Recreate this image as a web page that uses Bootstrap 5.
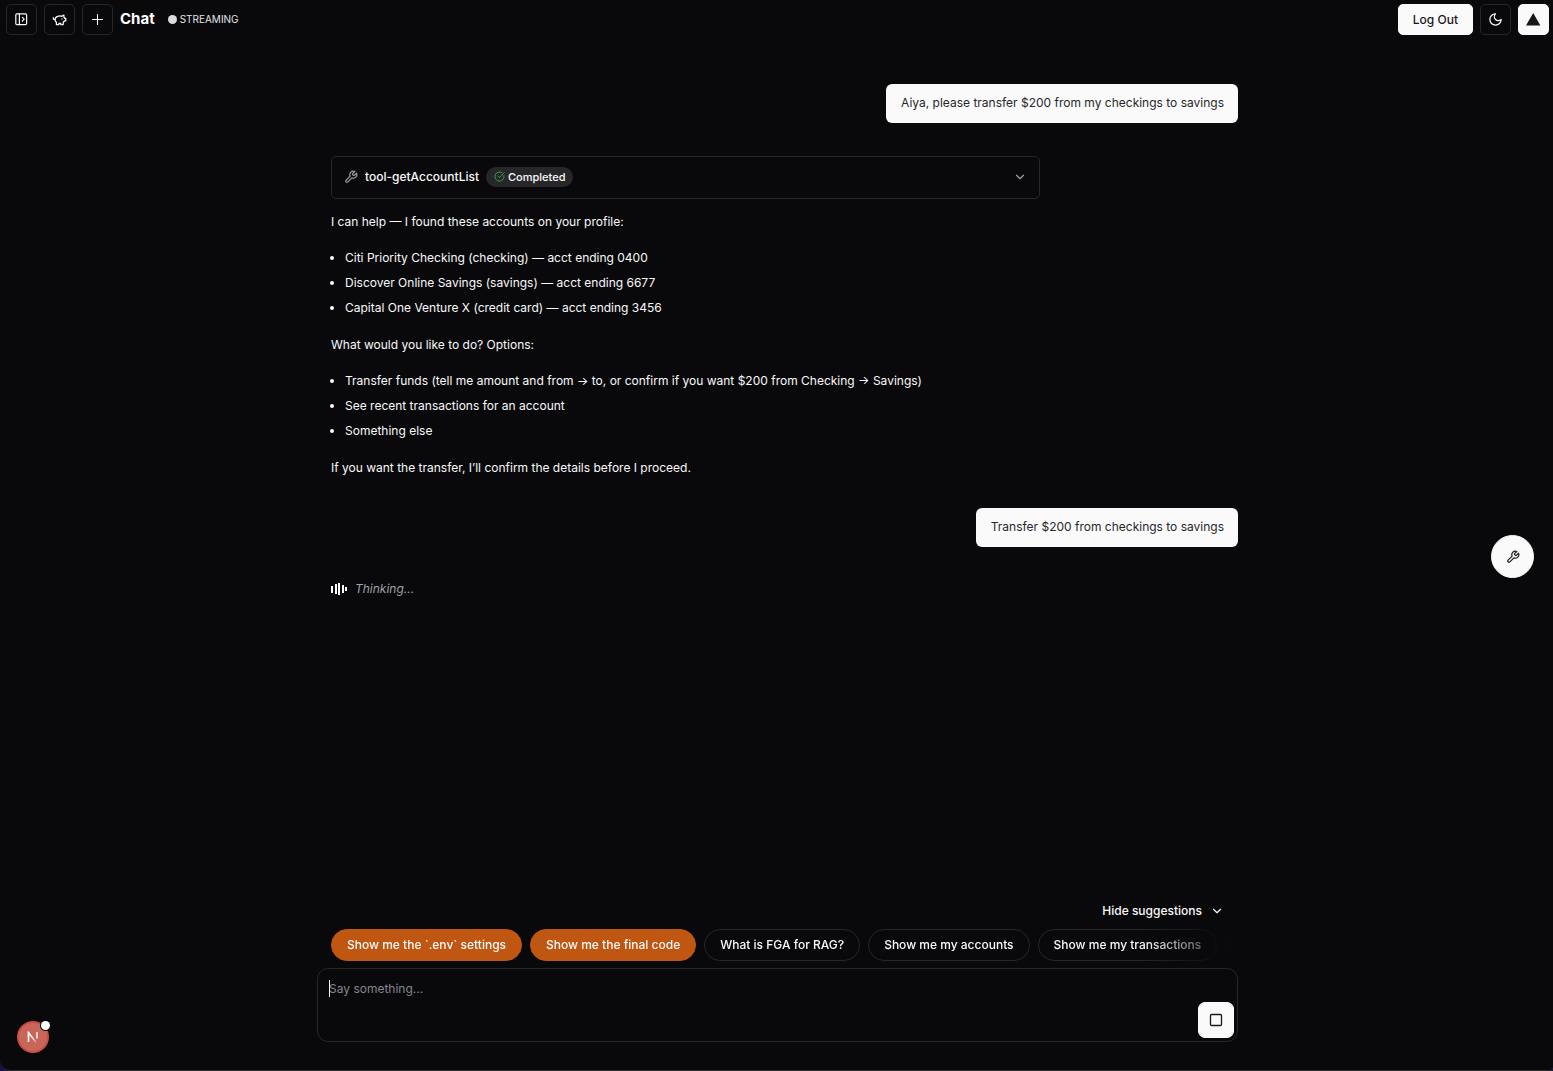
<!DOCTYPE html>
<html lang="en" data-bs-theme="dark">
<head>
<meta charset="utf-8">
<meta name="viewport" content="width=device-width, initial-scale=1">
<title>Chat</title>
<link href="https://cdn.jsdelivr.net/npm/bootstrap@5.3.0/dist/css/bootstrap.min.css" rel="stylesheet">
<style>
:root { --ink: #09090b; --paper: #fafafa; --line: #27272a; --muted: #a1a1aa; }
html { background: #15124a; }
body { background: transparent; color: var(--paper); font-family: Inter, "Liberation Sans", sans-serif; font-size: 12px; line-height: 22px; }
.app-shell { background: var(--ink); border-radius: 0 0 4px 10px; border-bottom: 1px solid #2c2b31; }
svg { display: block; flex: none; }
.stroke-icon { fill: none; stroke: currentColor; stroke-width: 2; stroke-linecap: round; stroke-linejoin: round; }
.top-bar { padding: 4px 4px 4px 6px; gap: 7px; }
.tool-btn { --bs-btn-padding-x: 0; --bs-btn-padding-y: 0; --bs-btn-border-radius: 5px; --bs-btn-color: var(--paper); --bs-btn-border-color: var(--line); --bs-btn-hover-color: var(--paper); --bs-btn-hover-border-color: var(--muted); width: 31px; height: 31px; display: inline-flex; align-items: center; justify-content: center; }
.solid-btn { --bs-btn-color: #18181b; --bs-btn-bg: var(--paper); --bs-btn-border-color: var(--paper); --bs-btn-hover-bg: #e4e4e7; --bs-btn-hover-color: #18181b; }
.logout-btn { width: auto; padding: 0 14px; font-size: 12px; font-weight: 500; }
.page-name { font-size: 15px; font-weight: 700; line-height: 20px; }
.top-bar .page-name, .live-state { padding-bottom: 1px; }
.live-state { font-size: 10px; color: #e4e4e7; gap: 3px; margin-left: 6px; }
.live-dot { width: 9px; height: 9px; border-radius: 50%; background: #dcdcdf; }
.column-wrap { padding-left: 2px; }
.chat-column { max-width: 921px; }
.thread { padding: 45px 0 0 14px; }
.bubble { background: var(--paper); color: #27272a; border-radius: 6px; padding: 8px 14px 9px 15px; }
.reply { margin: 33px 0 29px; }
.tool-card { width: 709px; max-width: 100%; border: 1px solid var(--line); border-radius: 5px; background: transparent; color: inherit; padding: 0 12px 2px; height: 43px; gap: 7px; margin-bottom: 12px; }
.tool-name { font-size: 12px; font-weight: 500; }
.state-pill { background: var(--line); font-size: 11px; font-weight: 500; line-height: 20px; padding: 0 8px; gap: 3px; }
.reply p { margin: 0 0 14px; }
.reply ul { margin: 0 0 15px; padding-left: 14px; }
.reply li + li { margin-top: 3px; }
.thinking { margin-top: 31px; gap: 8px; color: var(--muted); }
.hide-btn { --bs-btn-padding-x: 14px; --bs-btn-padding-y: 4px; --bs-btn-font-size: 12px; --bs-btn-font-weight: 500; --bs-btn-color: var(--paper); --bs-btn-hover-color: #d4d4d8; --bs-btn-line-height: 22px; gap: 8px; border: 0; }
.chip-row { gap: 8px; margin: 3px 0 7px 14px; -webkit-mask-image: linear-gradient(to right, #000 calc(100% - 96px), transparent); mask-image: linear-gradient(to right, #000 calc(100% - 96px), transparent); }
.chip { --bs-btn-padding-x: 15px; --bs-btn-padding-y: 4px; --bs-btn-font-size: 12px; --bs-btn-font-weight: 500; --bs-btn-line-height: 22px; --bs-btn-color: var(--paper); --bs-btn-border-color: var(--line); --bs-btn-hover-color: var(--paper); --bs-btn-hover-border-color: var(--muted); flex: none; }
.chip-hot { --bs-btn-bg: #bf5712; --bs-btn-border-color: #bf5712; --bs-btn-hover-bg: #a84b0d; }
.composer { border: 1px solid var(--line); border-radius: 11px; height: 74px; margin-bottom: 28px; }
.composer textarea { background: transparent; border: 0; padding: 9px 48px 9px 11px; font-size: 12px; line-height: 22px; resize: none; color: var(--paper); }
.composer textarea::placeholder { color: #85858e; }
.text-caret { left: 11px; top: 11px; width: 1px; height: 17px; background: var(--paper); }
.stop-btn { width: 36px; height: 36px; right: 3px; bottom: 3px; --bs-btn-border-radius: 7px; }
.fab { width: 43px; height: 43px; right: 19px; top: 535px; --bs-btn-border-radius: 50%; }
.dev-badge { left: 17px; bottom: 17px; width: 32px; height: 32px; border: 2px solid #c94f45; background: #ca6559; border-radius: 50%; padding: 0; }
.dev-dot { top: -2px; right: -3px; width: 9px; height: 9px; border-radius: 50%; background: #fff; box-shadow: 0 0 0 1px var(--ink); }
</style>
</head>
<body>
<svg width="0" height="0" class="position-absolute" aria-hidden="true">
  <symbol id="wrench" viewBox="0 0 24 24"><path d="M14.7 6.3a1 1 0 0 0 0 1.4l1.6 1.6a1 1 0 0 0 1.4 0l3.77-3.77a6 6 0 0 1-7.94 7.94l-6.91 6.91a2.12 2.12 0 0 1-3-3l6.91-6.91a6 6 0 0 1 7.94-7.94l-3.76 3.76z"/></symbol>
  <symbol id="chevron" viewBox="0 0 24 24"><path d="m6 9 6 6 6-6"/></symbol>
</svg>
<div class="app-shell d-flex flex-column min-vh-100 overflow-hidden position-relative">
  <header class="top-bar d-flex align-items-center">
    <button class="btn tool-btn" type="button" aria-label="Toggle sidebar"><svg class="stroke-icon" width="15" height="15" viewBox="0 0 25 25"><rect x="3" y="3" width="18" height="18" rx="2"/><path d="M9 3v18M14 9l3 3-3 3"/></svg></button>
    <button class="btn tool-btn" type="button" aria-label="Accounts"><svg class="stroke-icon" width="15" height="15" viewBox="0 0 24 24"><path d="M19 5c-1.5 0-2.8 1.4-3 2-3.5-1.5-11-.3-11 5 0 1.8 0 3 2 4.5V20h4v-2h3v2h4v-4c1-.5 1.7-1 2-2h2v-4h-2c0-1-.5-1.5-1-2V5zM2 9v1c0 1.1.9 2 2 2h1M16 11h.01"/></svg></button>
    <button class="btn tool-btn" type="button" aria-label="New chat"><svg class="stroke-icon" width="15" height="15" viewBox="0 0 24 24"><path d="M4 12h16M12 4v16" stroke-width="1.700"/></svg></button>
    <h1 class="page-name mb-0">Chat</h1>
    <div class="live-state d-flex align-items-center"><span class="live-dot"></span>STREAMING</div>
    <button class="btn tool-btn solid-btn logout-btn ms-auto" type="button">Log Out</button>
    <button class="btn tool-btn" type="button" aria-label="Toggle theme"><svg class="stroke-icon" width="15" height="15" viewBox="0 0 24 24"><path d="M12 3a6 6 0 0 0 9 9 9 9 0 1 1-9-9Z"/></svg></button>
    <a class="btn tool-btn solid-btn" href="#" aria-label="Deploy"><svg width="15" height="13" viewBox="0 0 15 13"><path d="M7.200 0l7.200 12.500H0z" fill="#18181b"/></svg></a>
  </header>

  <main class="column-wrap flex-grow-1 d-flex flex-column">
    <div class="chat-column thread w-100 mx-auto flex-grow-1">
      <div class="d-flex justify-content-end"><div class="bubble">Aiya, please transfer $200 from my checkings to savings</div></div>
      <section class="reply">
        <button class="tool-card d-flex align-items-center" type="button" aria-expanded="false">
          <svg class="stroke-icon" width="14" height="14" color="#a1a1aa"><use href="#wrench"/></svg>
          <span class="tool-name">tool-getAccountList</span>
          <span class="state-pill rounded-pill d-flex align-items-center"><svg class="stroke-icon" width="11" height="11" viewBox="0 0 24 24" color="#2fa84f"><path d="M21.8 10A10 10 0 1 1 17 3.34M9 11l3 3L22 4"/></svg>Completed</span>
          <svg class="stroke-icon ms-auto" width="14" height="14" color="#a1a1aa"><use href="#chevron"/></svg>
        </button>
        <p>I can help — I found these accounts on your profile:</p>
        <ul>
          <li>Citi Priority Checking (checking) — acct ending 0400</li>
          <li>Discover Online Savings (savings) — acct ending 6677</li>
          <li>Capital One Venture X (credit card) — acct ending 3456</li>
        </ul>
        <p>What would you like to do? Options:</p>
        <ul>
          <li>Transfer funds (tell me amount and from → to, or confirm if you want $200 from Checking → Savings)</li>
          <li>See recent transactions for an account</li>
          <li>Something else</li>
        </ul>
        <p class="mb-0">If you want the transfer, I’ll confirm the details before I proceed.</p>
      </section>
      <div class="d-flex justify-content-end"><div class="bubble">Transfer $200 from checkings to savings</div></div>
      <div class="thinking d-flex align-items-center" role="status">
        <svg width="16" height="12" viewBox="0 0 16 12" fill="#fff"><path d="M0 3h2v7H0zM4 1h2v10H4zM7 0h2v12H7zM11 2h2v8h-2zM14 4h2v4h-2z"/></svg>
        <em>Thinking...</em>
      </div>
    </div>

    <div class="chat-column w-100 mx-auto">
      <div class="d-flex justify-content-end">
        <button class="btn hide-btn d-flex align-items-center" type="button">Hide suggestions <svg class="stroke-icon" width="14" height="14"><use href="#chevron"/></svg></button>
      </div>
      <div class="chip-row d-flex overflow-hidden">
        <button class="btn chip chip-hot rounded-pill" type="button">Show me the `.env` settings</button>
        <button class="btn chip chip-hot rounded-pill" type="button">Show me the final code</button>
        <button class="btn chip rounded-pill" type="button">What is FGA for RAG?</button>
        <button class="btn chip rounded-pill" type="button">Show me my accounts</button>
        <button class="btn chip rounded-pill" type="button">Show me my transactions</button>
        <button class="btn chip rounded-pill" type="button" aria-label="More suggestions"></button>
      </div>
      <form class="composer position-relative">
        <textarea class="w-100 h-100 d-block shadow-none" aria-label="Message" placeholder="Say something..."></textarea>
        <span class="text-caret position-absolute"></span>
        <button class="btn tool-btn solid-btn stop-btn position-absolute" type="button" aria-label="Stop"><svg class="stroke-icon" width="14" height="14" viewBox="0 0 14 14"><rect x="1.500" y="1.500" width="11" height="11" rx="1" stroke-width="1.300"/></svg></button>
      </form>
    </div>
  </main>
  <button class="btn tool-btn solid-btn fab position-absolute" type="button" aria-label="Tools"><svg class="stroke-icon" width="14" height="14"><use href="#wrench"/></svg></button>
  <button class="dev-badge position-absolute d-flex align-items-center justify-content-center" type="button" aria-label="Developer tools">
    <svg width="12" height="12" viewBox="0 0 12 12" fill="none" stroke="#fff" stroke-width="1.400"><defs><linearGradient id="nfade" x1="0" y1="0" x2="0" y2="12" gradientUnits="userSpaceOnUse"><stop offset=".5" stop-color="#fff"/><stop offset="1" stop-color="#fff" stop-opacity=".2"/></linearGradient></defs><path d="M1.500 11V1.500L9 11.500" stroke="url(#nfade)"/><path d="M1.500 11V1M10 1v6.500"/></svg>
    <span class="dev-dot position-absolute"></span>
  </button>
</div>
<script src="https://cdn.jsdelivr.net/npm/bootstrap@5.3.0/dist/js/bootstrap.bundle.min.js"></script>
</body>
</html>
